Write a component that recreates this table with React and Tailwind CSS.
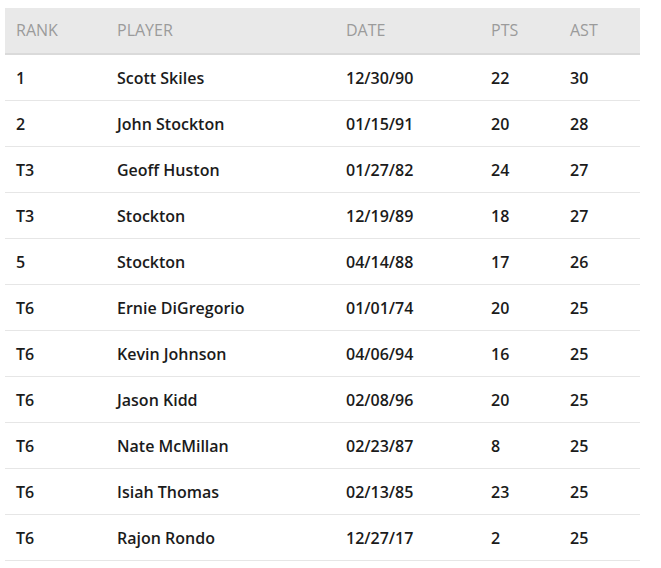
import React from 'react';

const rows = [
  ['1', 'Scott Skiles', '12/30/90', '22', '30'],
  ['2', 'John Stockton', '01/15/91', '20', '28'],
  ['T3', 'Geoff Huston', '01/27/82', '24', '27'],
  ['T3', 'Stockton', '12/19/89', '18', '27'],
  ['5', 'Stockton', '04/14/88', '17', '26'],
  ['T6', 'Ernie DiGregorio', '01/01/74', '20', '25'],
  ['T6', 'Kevin Johnson', '04/06/94', '16', '25'],
  ['T6', 'Jason Kidd', '02/08/96', '20', '25'],
  ['T6', 'Nate McMillan', '02/23/87', '8', '25'],
  ['T6', 'Isiah Thomas', '02/13/85', '23', '25'],
  ['T6', 'Rajon Rondo', '12/27/17', '2', '25'],
];

const cols = ['w-[101px]', 'w-[229px]', 'w-[145px]', 'w-[79px]', 'w-[81px]'];
const headers = ['RANK', 'PLAYER', 'DATE', 'PTS', 'AST'];

export default function App() {
  return (
    <div className="bg-white min-h-[568px] pl-[5px] pt-[8px] font-['Open_Sans','Lato',sans-serif]">
      <div className="w-[635px]">
        {/* Header */}
        <div className="flex h-[47px] items-center bg-[#e9e9e9] border-b-2 border-[#dadada] text-[16px] text-[#9b9b9b]">
          {headers.map((h, i) => (
            <div key={h} className={`${cols[i]} pl-[11px] pb-[2px]`}>{h}</div>
          ))}
        </div>
        {rows.map((r, ri) => (
          <div key={ri} className="flex h-[46px] items-center border-b border-[#e6e6e6] text-[16px] font-semibold text-[#1b1b1b]">
            {r.map((c, i) => (
              <div key={i} className={`${cols[i]} pl-[11px]`}>{c}</div>
            ))}
          </div>
        ))}
      </div>
    </div>
  );
}
